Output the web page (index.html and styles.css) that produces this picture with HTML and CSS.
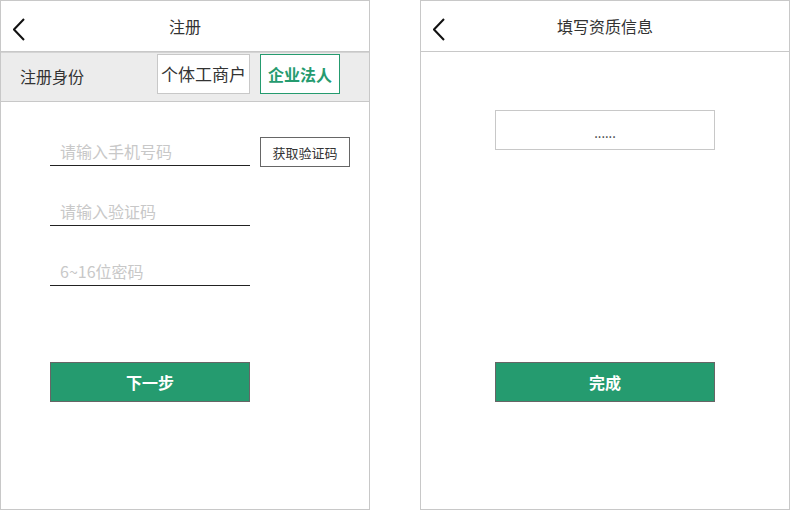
FILE: index.html
```html
<!DOCTYPE html>
<html>
<head>
    <meta charset="utf-8">
    <link rel="stylesheet" href="styles.css">
</head>
<body>
    <div class="screens">
        <!-- 注册 -->
        <div class="phone">
            <div class="header">
                <span class="back">
                    <svg viewBox="0 0 14 24"><polyline points="11,2 1,12.5 11,23"/></svg>
                </span>
                <span class="title">注册</span>
            </div>

            <div class="identity">
                <span class="identity-label">注册身份</span>
                <div class="identity-options">
                    <span class="option">个体工商户</span>
                    <span class="option active">企业法人</span>
                </div>
            </div>

            <div class="form">
                <div class="row">
                    <input type="text" class="field" placeholder="请输入手机号码">
                    <button class="code-btn">获取验证码</button>
                </div>
                <div class="row">
                    <input type="text" class="field" placeholder="请输入验证码">
                </div>
                <div class="row">
                    <input type="password" class="field" placeholder="6~16位密码">
                </div>
                <button class="primary-btn">下一步</button>
            </div>
        </div>

        <!-- 填写资质信息 -->
        <div class="phone">
            <div class="header">
                <span class="back">
                    <svg viewBox="0 0 14 24"><polyline points="11,2 1,12.5 11,23"/></svg>
                </span>
                <span class="title">填写资质信息</span>
            </div>

            <div class="info">
                <div class="info-box">......</div>
                <button class="primary-btn wide">完成</button>
            </div>
        </div>
    </div>
</body>
</html>
```

FILE: styles.css
```css
body {
    margin: 0;
    background: #fff;
    font-family: "Microsoft YaHei", "Noto Sans CJK SC", "Liberation Sans", sans-serif;
    color: #333;
}

.screens {
    display: flex;
    gap: 50px;
}

.phone {
    width: 368px;
    height: 508px;
    border: 1px solid #c8c8c8;
    display: flex;
    flex-direction: column;
}

.header {
    height: 50px;
    border-bottom: 1px solid #c8c8c8;
    display: flex;
    align-items: center;
    justify-content: center;
    position: relative;
}

.back {
    position: absolute;
    left: 12px;
    top: 16px;
    width: 14px;
    height: 24px;
}

.back svg {
    width: 14px;
    height: 24px;
    fill: none;
    stroke: #111;
    stroke-width: 2;
}

.title {
    font-size: 16px;
    color: #333;
}

.identity {
    height: 47px;
    background: #ececec;
    border-top: 1px solid #d4d4d4;
    border-bottom: 1px solid #c8c8c8;
    display: flex;
    align-items: flex-start;
    justify-content: space-between;
    padding: 1px 29px 0 19px;
}

.identity-label {
    font-size: 16px;
    line-height: 44px;
    color: #333;
}

.identity-options {
    display: flex;
    gap: 10px;
}

.option {
    height: 38px;
    line-height: 38px;
    padding: 0 3px;
    background: #fff;
    border: 1px solid #c8c8c8;
    font-size: 17px;
    color: #333;
}

.option.active {
    border-color: #259b6f;
    color: #259b6f;
    font-size: 16px;
    font-weight: bold;
    padding: 0 7px;
}

.form {
    display: flex;
    flex-direction: column;
    padding: 34px 0 0 49px;
}

.row {
    height: 30px;
    display: flex;
    align-items: flex-start;
    gap: 10px;
    margin-bottom: 30px;
}

.row:last-of-type {
    margin-bottom: 31px;
}

.field {
    width: 190px;
    height: 29px;
    padding: 0 0 0 10px;
    border: none;
    border-bottom: 1px solid #222;
    font-family: inherit;
    font-size: 16px;
    color: #333;
    outline: none;
}

.field::placeholder {
    color: #c8c8c8;
}

.code-btn {
    width: 90px;
    height: 30px;
    margin-top: 1px;
    padding: 0;
    background: #fff;
    border: 1px solid #666;
    font-family: inherit;
    font-size: 13px;
    color: #333;
}

.primary-btn {
    width: 200px;
    height: 40px;
    margin-top: 45px;
    background: #259b6f;
    border: 1px solid #666;
    color: #fff;
    font-family: inherit;
    font-size: 16px;
    font-weight: bold;
}

.info {
    display: flex;
    flex-direction: column;
    align-items: center;
    padding-top: 58px;
}

.info-box {
    width: 218px;
    height: 38px;
    line-height: 44px;
    border: 1px solid #c8c8c8;
    text-align: center;
    font-size: 13px;
    color: #333;
}

.primary-btn.wide {
    width: 220px;
    margin-top: 212px;
}
```
